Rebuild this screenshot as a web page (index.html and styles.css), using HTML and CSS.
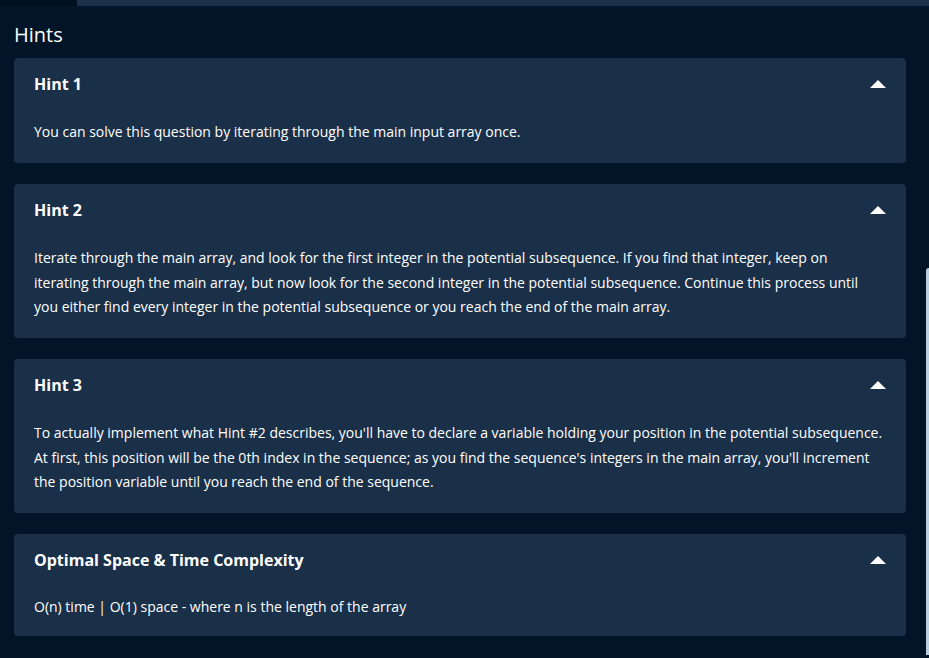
FILE: index.html
```html
<!DOCTYPE html>
<html>
<head>
<meta charset="utf-8">
<link rel="stylesheet" href="styles.css">
</head>
<body>
<div class="topbar"><div class="topbar-left"></div><div class="topbar-right"></div></div>
<div class="page">
  <h2 class="title">Hints</h2>
  <div class="card">
    <div class="card-head"><span class="card-title">Hint 1</span><span class="arrow"></span></div>
    <p class="card-body">You can solve this question by iterating through the main input array once.</p>
  </div>
  <div class="card">
    <div class="card-head"><span class="card-title">Hint 2</span><span class="arrow"></span></div>
    <p class="card-body">Iterate through the main array, and look for the first integer in the potential subsequence. If you find that integer, keep on iterating through the main array, but now look for the second integer in the potential subsequence. Continue this process until you either find every integer in the potential subsequence or you reach the end of the main array.</p>
  </div>
  <div class="card">
    <div class="card-head"><span class="card-title">Hint 3</span><span class="arrow"></span></div>
    <p class="card-body">To actually implement what Hint #2 describes, you'll have to declare a variable holding your position in the potential subsequence. At first, this position will be the 0th index in the sequence; as you find the sequence's integers in the main array, you'll increment the position variable until you reach the end of the sequence.</p>
  </div>
  <div class="card card-last">
    <div class="card-head"><span class="card-title">Optimal Space &amp; Time Complexity</span><span class="arrow"></span></div>
    <p class="card-body">O(n) time | O(1) space - where n is the length of the array</p>
  </div>
</div>
<div class="scrollbar"></div>
</body>
</html>
```
FILE: styles.css
```css
html, body {
  margin: 0;
  padding: 0;
  height: 100%;
  overflow: hidden;
}
body {
  background: #021528;
  font-family: "Open Sans", "Noto Sans", sans-serif;
  color: #ffffff;
  position: relative;
}
.topbar {
  display: flex;
  height: 6px;
}
.topbar-left {
  width: 77px;
  background: #01101f;
}
.topbar-right {
  flex: 1;
  background: #1b3049;
}
.page {
  padding: 0 23px 0 14px;
}
.title {
  margin: 0;
  font-size: 20px;
  font-weight: 400;
  line-height: 28px;
  padding: 15px 0 0 0;
  height: 37px;
  box-sizing: content-box;
}
.card {
  background: #1a3049;
  border-radius: 4px;
  padding: 16px 20px 18.5px 20px;
  margin-bottom: 21px;
}
.card-head {
  display: flex;
  justify-content: space-between;
  align-items: center;
  height: 20px;
}
.card-title {
  font-size: 16px;
  font-weight: 700;
  line-height: 20px;
}
.arrow {
  width: 0;
  height: 0;
  border-left: 8px solid transparent;
  border-right: 8px solid transparent;
  border-bottom: 8px solid #ffffff;
}
.card-body {
  margin: 26px 2px 0 0;
  font-size: 14px;
  line-height: 24.5px;
}
.card-last {
  padding-bottom: 16.5px;
}
.card-last .card-body {
  margin-top: 25px;
}
.scrollbar {
  position: absolute;
  right: 0;
  top: 268px;
  width: 3px;
  height: 387px;
  background: #b8cfe0;
  border-radius: 3px 0 0 0;
}
```
